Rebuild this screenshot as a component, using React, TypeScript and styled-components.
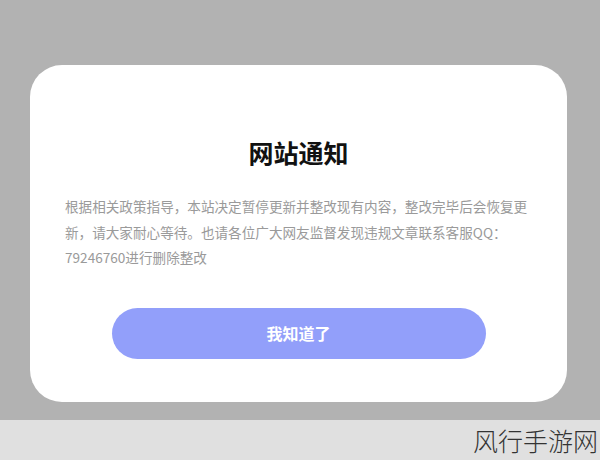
import styled, { createGlobalStyle } from "styled-components";

const GlobalStyle = createGlobalStyle`
  html, body {
    margin: 0;
    padding: 0;
    background: #b2b2b2;
  }
  body {
    font-family: "Noto Sans CJK SC", "Noto Sans", sans-serif;
  }
`;

const Page = styled.div`
  width: 600px;
  height: 460px;
  display: flex;
  flex-direction: column;
  overflow: hidden;
`;

const Stage = styled.div`
  height: 420px;
  box-sizing: border-box;
  padding: 65px 0 0 30px;
  background: #b2b2b2;
`;

const Card = styled.div`
  width: 537px;
  height: 337px;
  box-sizing: border-box;
  padding: 72px 35px 0;
  background: #ffffff;
  border-radius: 32px;
  display: flex;
  flex-direction: column;
`;

const Title = styled.h2`
  margin: 0;
  font-size: 25px;
  line-height: 30px;
  font-weight: 700;
  color: #111;
  text-align: center;
`;

const Message = styled.p`
  margin: 27px 0 0;
  font-size: 13.6px;
  line-height: 25.5px;
  color: #9a9a9a;
`;

const ConfirmButton = styled.button`
  align-self: center;
  margin-top: 37px;
  width: 374px;
  height: 51px;
  border: 0;
  border-radius: 26px;
  background: #929ffa;
  color: #fff;
  font-family: inherit;
  font-size: 16px;
  font-weight: 700;
  cursor: pointer;
`;

const Footer = styled.div`
  height: 40px;
  background: #e0e0e0;
  display: flex;
  align-items: center;
  justify-content: flex-end;
  padding-right: 2px;
`;

const Watermark = styled.span`
  font-size: 25px;
  font-weight: 300;
  color: #333;
  line-height: 1;
`;

export default function App() {
  return (
    <Page>
      <GlobalStyle />
      <Stage>
        <Card>
          <Title>网站通知</Title>
          <Message>
            根据相关政策指导，本站决定暂停更新并整改现有内容，整改完毕后会恢复更新，请大家耐心等待。也请各位广大网友监督发现违规文章联系客服QQ：79246760进行删除整改
          </Message>
          <ConfirmButton>我知道了</ConfirmButton>
        </Card>
      </Stage>
      <Footer>
        <Watermark>风行手游网</Watermark>
      </Footer>
    </Page>
  );
}
